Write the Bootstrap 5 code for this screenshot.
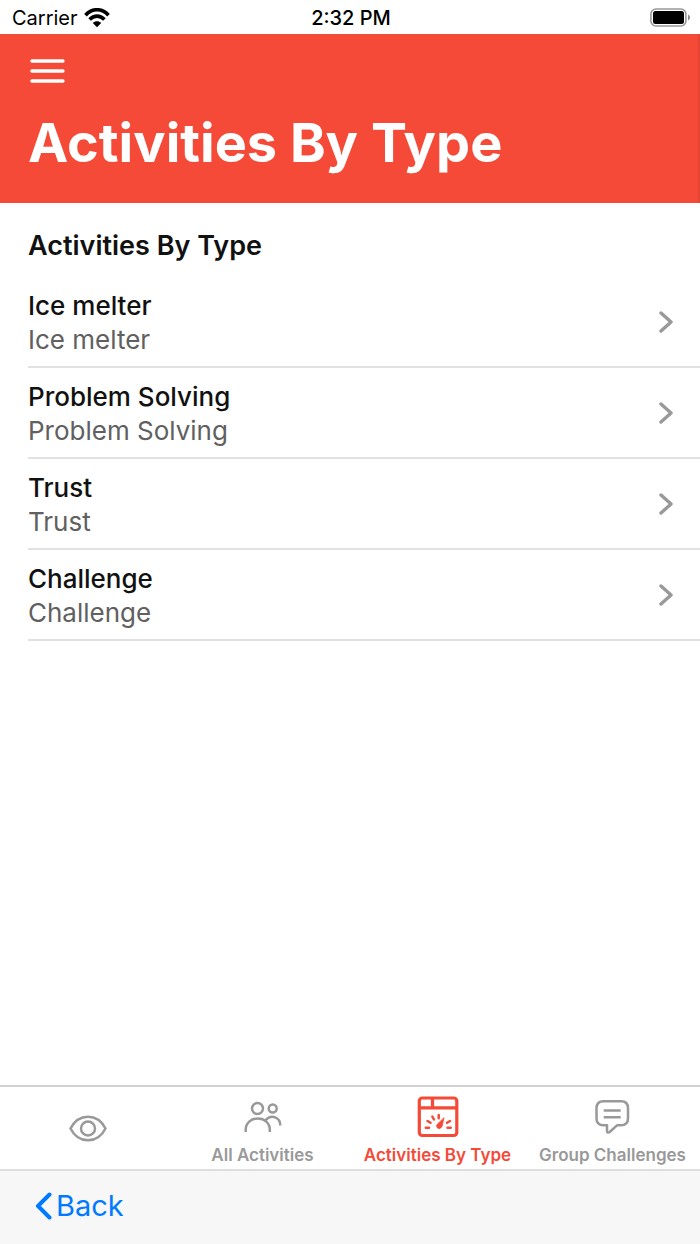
<!DOCTYPE html>
<html lang="en">
<head>
<meta charset="utf-8">
<meta name="viewport" content="width=device-width, initial-scale=1">
<title>Activities By Type</title>
<link href="https://cdn.jsdelivr.net/npm/bootstrap@5.3.0/dist/css/bootstrap.min.css" rel="stylesheet">
<style>
  :root { --brand: #f54a37; --muted-icon: #999; }
  body { font-family: Inter, "Liberation Sans", sans-serif; color: #111; background: #fff; }
  svg { display: block; }
  .status-bar { display: grid; grid-template-columns: 1fr auto 1fr; height: 34px; padding: 1px 10px 0 12px; font-size: 20px; line-height: 34px; color: #000; }
  .carrier { gap: 6px; }
  .clock { font-weight: 500; }
  .app-header { background: var(--brand); color: #fff; padding: 24px 28px 28px; border-right: 2px solid #e34636; }
  .menu-btn { padding: 0 2px; border: 0; border-radius: 0; }
  .page-title { font-size: 54px; line-height: 64px; font-weight: 700; margin: 27px 0 0; }
  .section-title { font-size: 27px; line-height: 34px; font-weight: 600; margin: 26px 0 14px; }
  .content-list { padding-left: 28px; }
  .type-row { padding: 12px 27px 9px 0; border-bottom: 2px solid #e2e2e2; font-size: 26px; line-height: 34px; color: #111; }
  .type-name { font-weight: 500; }
  .type-note { color: #606060; }
  .tab-strip { border-top: 2px solid #d2d2d2; height: 84px; }
  .tab-link { flex: 1 1 0; min-width: 0; color: var(--muted-icon); font-size: 17px; line-height: 20px; font-weight: 600; white-space: nowrap; padding-bottom: 4px; }
  .tab-link.active { color: var(--brand); }
  .tab-icon { height: 48px; }
  .back-bar { background: #f7f7f7; border-top: 2px solid #dedede; height: 75px; padding: 0 0 3px 35px; }
  .back-link { color: #007aff; font-size: 29px; line-height: 40px; }
</style>
</head>
<body>
<div class="d-flex flex-column min-vh-100">
  <div class="status-bar">
    <div class="carrier d-flex align-items-center">
      <span>Carrier</span>
      <svg width="26" height="20" viewBox="0 0 26 20" fill="none" stroke="#000" stroke-width="3.6" aria-label="Wi-Fi">
        <path d="M1.500 7.200C8-.1 18-.1 24.500 7.200M5.600 11.500C10 7 16 7 20.400 11.500"/>
        <path d="M8.800 15C11.300 12.500 14.700 12.500 17.200 15L13 19.200Z" fill="#000" stroke="none"/>
      </svg>
    </div>
    <span class="clock">2:32 PM</span>
    <div class="d-flex align-items-center justify-content-end">
      <svg width="40" height="20" viewBox="0 0 40 20" aria-label="Battery full">
        <rect x=".9" y="1" width="35" height="17" rx="5" fill="none" stroke="#999" stroke-width="1.600"/>
        <rect x="3" y="3" width="31" height="13" rx="2.500" fill="#000"/>
        <path d="M38 6.500v6q2-.8 2-3t-2-3Z" fill="#888"/>
      </svg>
    </div>
  </div>

  <header class="app-header">
    <button type="button" class="btn menu-btn d-block" aria-label="Menu">
      <svg width="36" height="26" viewBox="0 0 36 26" stroke="#fff" stroke-width="3.400" stroke-linecap="round"><path d="M2 3h31M2 13h31M2 23h31"/></svg>
    </button>
    <h1 class="page-title">Activities By Type</h1>
  </header>

  <main class="content-list flex-grow-1">
    <h2 class="section-title">Activities By Type</h2>
    <nav aria-label="Activity types">
      <a href="#ice-melter" class="type-row d-flex align-items-center justify-content-between text-decoration-none">
        <span><span class="type-name d-block">Ice melter</span><span class="type-note d-block">Ice melter</span></span>
        <svg width="14" height="24" viewBox="0 0 14 24" fill="none" stroke="#999" stroke-width="3.400" stroke-linecap="round" stroke-linejoin="round"><path d="M2 2l10 9L2 20"/></svg>
      </a>
      <a href="#problem-solving" class="type-row d-flex align-items-center justify-content-between text-decoration-none">
        <span><span class="type-name d-block">Problem Solving</span><span class="type-note d-block">Problem Solving</span></span>
        <svg width="14" height="24" viewBox="0 0 14 24" fill="none" stroke="#999" stroke-width="3.400" stroke-linecap="round" stroke-linejoin="round"><path d="M2 2l10 9L2 20"/></svg>
      </a>
      <a href="#trust" class="type-row d-flex align-items-center justify-content-between text-decoration-none">
        <span><span class="type-name d-block">Trust</span><span class="type-note d-block">Trust</span></span>
        <svg width="14" height="24" viewBox="0 0 14 24" fill="none" stroke="#999" stroke-width="3.400" stroke-linecap="round" stroke-linejoin="round"><path d="M2 2l10 9L2 20"/></svg>
      </a>
      <a href="#challenge" class="type-row d-flex align-items-center justify-content-between text-decoration-none">
        <span><span class="type-name d-block">Challenge</span><span class="type-note d-block">Challenge</span></span>
        <svg width="14" height="24" viewBox="0 0 14 24" fill="none" stroke="#999" stroke-width="3.400" stroke-linecap="round" stroke-linejoin="round"><path d="M2 2l10 9L2 20"/></svg>
      </a>
    </nav>
  </main>

  <nav class="tab-strip d-flex" aria-label="Sections">
    <a href="#overview" class="tab-link d-flex align-items-center justify-content-center text-decoration-none pb-0" aria-label="Overview">
      <svg width="38" height="28" viewBox="0 0 38 28" fill="none" stroke="currentColor" stroke-width="2.500"><path d="M1.500 14.500C9.500-1.300 28.500-1.300 36.500 14.500C28.500 30.300 9.500 30.300 1.500 14.500Z"/><circle cx="19" cy="14.500" r="7"/></svg>
    </a>
    <a href="#all" class="tab-link d-flex flex-column align-items-center justify-content-end gap-1 text-decoration-none">
      <span class="tab-icon d-flex align-items-center">
        <svg width="40" height="32" viewBox="0 0 40 32" fill="none" stroke="currentColor" stroke-width="2.500"><circle cx="14.500" cy="7.500" r="5.500"/><circle cx="29.700" cy="7.500" r="4"/><path d="M2.700 31v-2.300C2.700 22 8 17.500 14.800 17.500S26.800 22 26.800 28.700V31M22.500 19.200C28.500 12.500 37.300 16.500 37.300 24.500"/></svg>
      </span>
      <span>All Activities</span>
    </a>
    <a href="#by-type" class="tab-link active d-flex flex-column align-items-center justify-content-end gap-1 text-decoration-none" aria-current="page">
      <span class="tab-icon d-flex align-items-center">
        <svg width="42" height="42" viewBox="0 0 42 42" fill="none" stroke="currentColor" stroke-width="3.200" stroke-linecap="round"><rect x="2.300" y="2" width="37.500" height="37.500" rx="3"/><path d="M3 11.800h36M15.500 3v9" stroke-linecap="butt"/><path d="M8.800 31.800h3.200M10.500 25l3 1.800M15.300 20.500l1.700 3M21.700 19v3.300M33 25l-3 1.800M30.500 31.800h3.200" stroke-width="2.500"/><path d="M27 22L25 30.500q-1.500 3-4.200 1.700-2.200-1.500-.5-4Z" fill="currentColor" stroke-width=".8"/></svg>
      </span>
      <span>Activities By Type</span>
    </a>
    <a href="#challenges" class="tab-link d-flex flex-column align-items-center justify-content-end gap-1 text-decoration-none">
      <span class="tab-icon d-flex align-items-center">
        <svg width="36" height="34" viewBox="0 0 36 34" fill="none" stroke="currentColor" stroke-width="2.500" stroke-linejoin="round"><path d="M8.500 1.300h17.500q7 0 7 7v10q0 7-7 7h-4l-7.300 6.700q-2.500 1.500-2.700-1v-5.700H8.500q-7 0-7-7v-10q0-7 7-7ZM8.700 10.500h17M8.700 17.300h17"/></svg>
      </span>
      <span>Group Challenges</span>
    </a>
  </nav>

  <footer class="back-bar d-flex align-items-center">
    <a href="#back" class="back-link d-flex align-items-center gap-1 text-decoration-none">
      <svg width="17" height="28" viewBox="0 0 17 28" fill="none" stroke="currentColor" stroke-width="4" stroke-linecap="round" stroke-linejoin="round"><path d="M14.500 2.500L3 14l11.500 11.500"/></svg>
      <span>Back</span>
    </a>
  </footer>
</div>
<script src="https://cdn.jsdelivr.net/npm/bootstrap@5.3.0/dist/js/bootstrap.bundle.min.js"></script>
</body>
</html>
